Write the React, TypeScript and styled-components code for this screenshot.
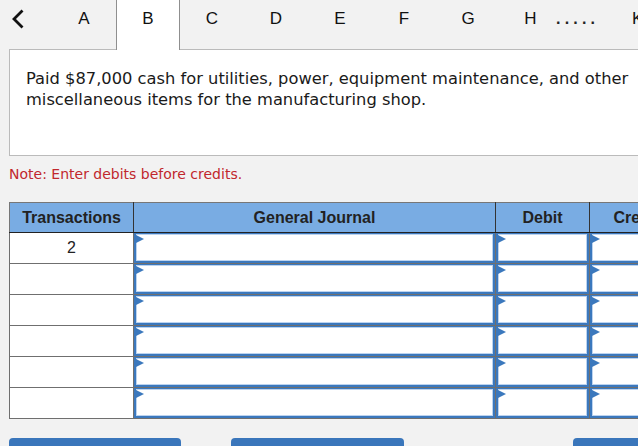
import React from "react";
import styled, { createGlobalStyle } from "styled-components";

const tabs = ["A", "B", "C", "D", "E", "F", "G", "H"];
const rows = ["2", "", "", "", "", ""];

export default function App() {
  return (
    <>
      <GlobalStyle />
      <TabBar>
        <BackTab>
          <svg width="14" height="20" viewBox="0 0 14 20">
            <polyline points="11.5,1.5 3,10 11.5,18.5" fill="none" stroke="#111" strokeWidth="2.8" />
          </svg>
        </BackTab>
        {tabs.map((t) => (
          <Tab key={t} $active={t === "B"} $narrow={t === "H"}>
            {t}
          </Tab>
        ))}
        <More>.....</More>
        <Tab $tail>K</Tab>
      </TabBar>

      <Content>
        <QuestionBox>
          Paid $87,000 cash for utilities, power, equipment maintenance, and other
          miscellaneous items for the manufacturing shop.
        </QuestionBox>

        <Note>Note: Enter debits before credits.</Note>

        <Journal>
          <colgroup>
            <col style={{ width: 124 }} />
            <col style={{ width: 362 }} />
            <col style={{ width: 94 }} />
            <col style={{ width: 94 }} />
          </colgroup>
          <thead>
            <tr>
              <HeadCell>Transactions</HeadCell>
              <HeadCell>General Journal</HeadCell>
              <HeadCell>Debit</HeadCell>
              <HeadCell>Credit</HeadCell>
            </tr>
          </thead>
          <tbody>
            {rows.map((r, i) => (
              <tr key={i}>
                <NumCell>{r}</NumCell>
                <EntryCell><Field /></EntryCell>
                <EntryCell><Field /></EntryCell>
                <EntryCell><Field /></EntryCell>
              </tr>
            ))}
          </tbody>
        </Journal>

        <Actions>
          <ActionButton $width={172}>Record entry</ActionButton>
          <ActionButton $width={173}>Clear entry</ActionButton>
          <ActionButton $width={110} $push>View general journal</ActionButton>
        </Actions>
      </Content>
    </>
  );
}

const GlobalStyle = createGlobalStyle`
  html, body {
    margin: 0;
    background: #f2f2f2;
    overflow: hidden;
  }
  body {
    font-family: "Liberation Sans", Arial, sans-serif;
    color: #111;
  }
`;

const TabBar = styled.div`
  display: flex;
  align-items: flex-start;
  height: 49px;
  width: 700px;
`;

const BackTab = styled.div`
  width: 52px;
  box-sizing: border-box;
  padding: 9px 0 0 11px;
  display: flex;
`;

const Tab = styled.div<{ $active?: boolean; $narrow?: boolean; $tail?: boolean }>`
  width: ${(p) => (p.$narrow ? "61px" : p.$tail ? "auto" : "64px")};
  padding: 9px 0 0 ${(p) => (p.$tail ? "4px" : "0")};
  box-sizing: border-box;
  display: flex;
  justify-content: ${(p) => (p.$tail ? "flex-start" : "center")};
  font-size: 17px;
  line-height: 20px;
  color: #111;
  position: relative;
  z-index: 1;
  height: ${(p) => (p.$active ? "50px" : "49px")};
  background: ${(p) => (p.$active ? "#fff" : "transparent")};
  border-left: ${(p) => (p.$active ? "1px solid #8f8f8f" : "none")};
  border-right: ${(p) => (p.$active ? "1px solid #8f8f8f" : "none")};
`;

const More = styled.div`
  width: 72px;
  margin-left: -5px;
  padding-top: 9px;
  font-size: 16px;
  line-height: 20px;
  font-weight: bold;
  letter-spacing: 4.2px;
  color: #222;
`;

const Content = styled.div`
  width: 674px;
  margin-left: 9px;
`;

const QuestionBox = styled.div`
  background: #fff;
  border: 1px solid #bbb;
  padding: 18px 16px 45px;
  font-family: "DejaVu Sans", Verdana, sans-serif;
  font-size: 16.3px;
  line-height: 21px;
  color: #1a1a1a;
`;

const Note = styled.div`
  margin: 10px 0 19px;
  font-family: "DejaVu Sans", Verdana, sans-serif;
  font-size: 14px;
  line-height: 17px;
  color: #c1272d;
`;

const Journal = styled.table`
  border-collapse: collapse;
  table-layout: fixed;
  width: 674px;
`;

const HeadCell = styled.th`
  height: 29px;
  padding: 0;
  background: #79ace3;
  border-top: 1px solid #777;
  border-bottom: 1px solid #222;
  border-left: 1px solid #333;
  border-right: 1px solid #333;
  font-size: 16px;
  font-weight: bold;
  color: #222;
  text-align: center;

  &:first-child {
    border-left-color: #777;
  }
`;

const NumCell = styled.td`
  height: 30px;
  padding: 0;
  background: #fff;
  border: 1px solid #6f6f6f;
  text-align: center;
  font-size: 16px;
  color: #222;

  tr:first-child & {
    border-top: none;
  }
`;

const EntryCell = styled.td`
  padding: 0;
  background: #fff;
  border: 1px solid #6f6f6f;

  tr:first-child & {
    border-top: none;
  }
`;

const Field = styled.div`
  position: relative;
  height: 30px;
  box-sizing: border-box;
  border: 2px solid #3b78bd;
  border-top-width: 1px;
  box-shadow: inset 0 0 0 1px #bcd3ef;
  background: #fff;

  &::before {
    content: "";
    position: absolute;
    left: 0;
    top: 1px;
    border-top: 4.5px solid transparent;
    border-bottom: 4.5px solid transparent;
    border-left: 8px solid #3b78bd;
  }
`;

const Actions = styled.div`
  display: flex;
  gap: 50px;
  margin-top: 19px;
`;

const ActionButton = styled.button<{ $width: number; $push?: boolean }>`
  width: ${(p) => p.$width}px;
  height: 34px;
  margin-left: ${(p) => (p.$push ? "auto" : "0")};
  border: none;
  border-radius: 4px;
  background: #3a76bb;
  color: #fff;
  font-family: "Liberation Sans", Arial, sans-serif;
  font-size: 14px;
  padding-top: 16px;
`;
